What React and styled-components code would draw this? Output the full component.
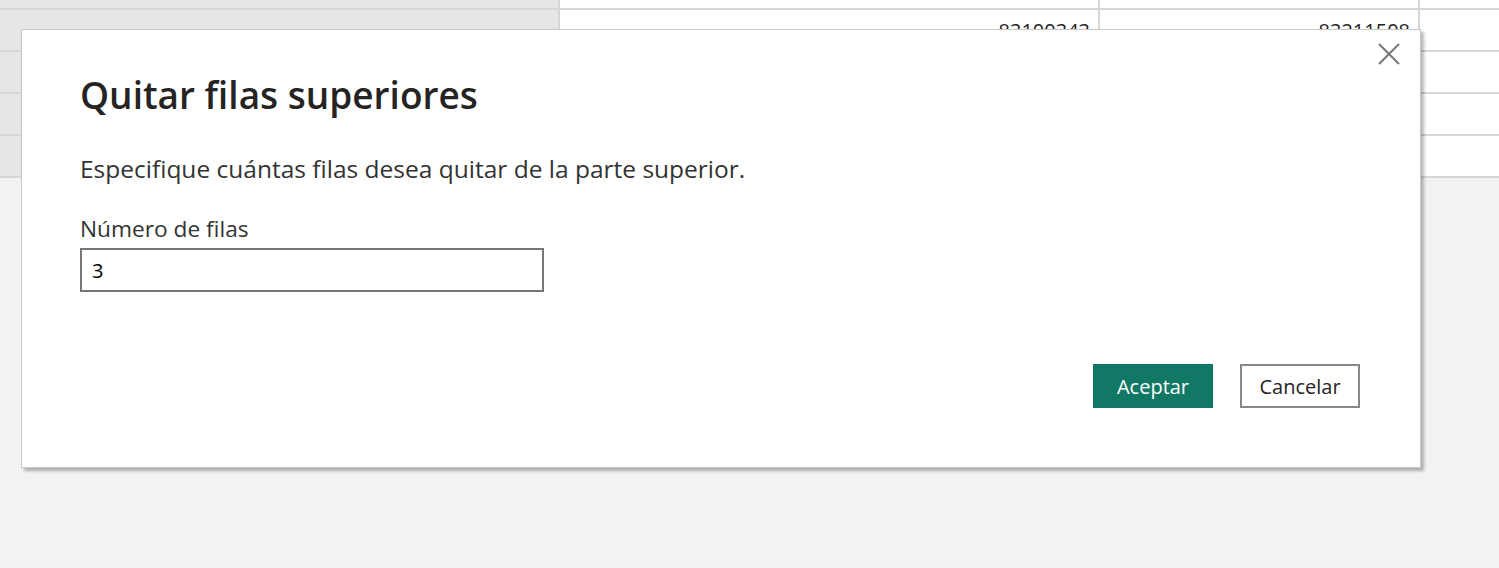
import React from 'react';
import styled, { createGlobalStyle } from 'styled-components';

const GlobalStyle = createGlobalStyle`
  html, body {
    margin: 0;
    padding: 0;
    background: #f3f2f1;
    font-family: "Open Sans", "Noto Sans", sans-serif;
  }
  #root {
    position: relative;
    width: 1499px;
    height: 568px;
    overflow: hidden;
  }
`;

const Table = styled.div`
  display: grid;
  grid-template-columns: 560px 540px 320px 1fr;
`;

const Cell = styled.div`
  height: ${(p) => (p.short ? '8px' : '40px')};
  background: ${(p) => (p.head ? '#e6e6e6' : '#ffffff')};
  border-bottom: 2px solid #d6d6d6;
  border-right: ${(p) => (p.last ? 'none' : '2px solid #d6d6d6')};
  display: flex;
  align-items: center;
  justify-content: flex-end;
  padding-right: 8px;
  font-size: 20px;
  color: #252423;
  overflow: hidden;
`;

const Dialog = styled.div`
  position: absolute;
  left: 21px;
  top: 29px;
  width: 1400px;
  height: 439px;
  background: #ffffff;
  border: 1px solid #c8c8c8;
  box-shadow: 3px 3px 3px rgba(0, 0, 0, 0.28);
  padding: 0 60px 0 58px;
  box-sizing: border-box;
  display: flex;
  flex-direction: column;
`;

const CloseButton = styled.button`
  position: absolute;
  top: 11px;
  right: 18px;
  width: 26px;
  height: 26px;
  padding: 0;
  border: none;
  background: transparent;
  display: flex;
  align-items: center;
  justify-content: center;
`;

const Title = styled.h1`
  margin: 41px 0 0;
  font-size: 37px;
  font-weight: 600;
  line-height: 48px;
  color: #252423;
`;

const Description = styled.p`
  margin: 34px 0 0;
  font-size: 24.5px;
  line-height: 32px;
  color: #333333;
`;

const Label = styled.label`
  margin-top: 29px;
  font-size: 22.7px;
  line-height: 30px;
  color: #333333;
`;

const Input = styled.input`
  margin-top: 4px;
  width: 464px;
  height: 44px;
  box-sizing: border-box;
  border: 2px solid #767676;
  padding: 0 10px;
  font-family: inherit;
  font-size: 20px;
  color: #000000;
  outline: none;
`;

const Footer = styled.div`
  margin-top: 72px;
  display: flex;
  justify-content: flex-end;
  gap: 27px;
`;

const Button = styled.button`
  width: 120px;
  height: 44px;
  box-sizing: border-box;
  font-family: inherit;
  font-size: 20px;
  background: ${(p) => (p.primary ? '#117865' : '#ffffff')};
  color: ${(p) => (p.primary ? '#ffffff' : '#252423')};
  border: ${(p) => (p.primary ? 'none' : '2px solid #8a8886')};
  padding: 0;
`;

const rows = [
  { short: true, values: ['', '', ''] },
  { values: ['83100343', '83211508', ''] },
  { values: ['', '', ''] },
  { values: ['', '', ''] },
  { values: ['', '', ''] },
];

export default function App() {
  return (
    <>
      <GlobalStyle />
      <Table>
        {rows.map((row, i) => (
          <React.Fragment key={i}>
            <Cell head short={row.short} />
            <Cell short={row.short}>{row.values[0]}</Cell>
            <Cell short={row.short}>{row.values[1]}</Cell>
            <Cell short={row.short} last>{row.values[2]}</Cell>
          </React.Fragment>
        ))}
      </Table>
      <Dialog>
        <CloseButton aria-label="Cerrar">
          <svg width="22" height="22" viewBox="0 0 22 22">
            <path d="M1 1 L21 21 M21 1 L1 21" stroke="#777777" strokeWidth="2" fill="none" />
          </svg>
        </CloseButton>
        <Title>Quitar filas superiores</Title>
        <Description>Especifique cuántas filas desea quitar de la parte superior.</Description>
        <Label>Número de filas</Label>
        <Input defaultValue="3" />
        <Footer>
          <Button primary>Aceptar</Button>
          <Button>Cancelar</Button>
        </Footer>
      </Dialog>
    </>
  );
}
